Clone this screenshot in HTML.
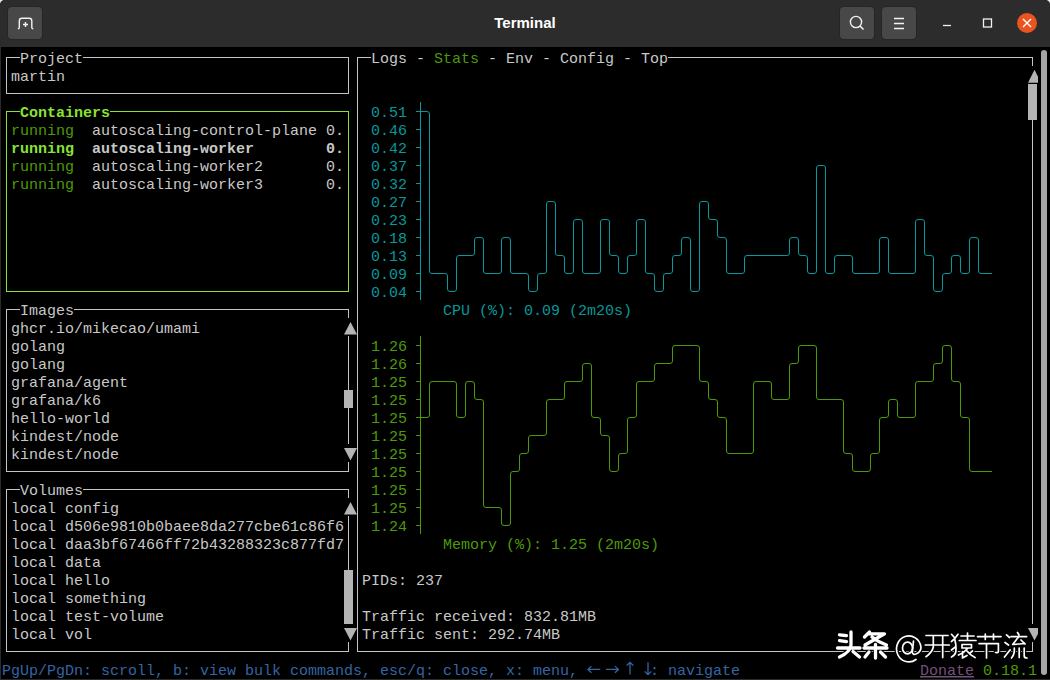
<!DOCTYPE html>
<html><head><meta charset="utf-8"><style>
html,body{margin:0;padding:0;}
body{width:1050px;height:680px;overflow:hidden;background:#e8e8e8;position:relative;}
#win{position:absolute;left:0;top:0;width:1050px;height:680px;background:#000;border-radius:5px 5px 0 0;overflow:hidden;}
#tb{position:absolute;left:0;top:0;width:1050px;height:47px;background:#2c2c2c;}
.btn{position:absolute;top:7px;width:34px;height:32px;background:#484848;border-radius:4px;box-shadow:0 0 0 1px #262626;}
.btn svg{position:absolute;left:0;top:0;}
#title{position:absolute;left:0;width:1050px;top:14px;text-align:center;color:#fff;font:bold 15px "Liberation Sans",sans-serif;}
#term{position:absolute;left:0;top:0;}
#term text{font-family:"Liberation Mono",monospace;font-size:15px;white-space:pre;}
#lb{position:absolute;left:0;top:47px;width:1px;height:633px;background:#2a2a2a;}
#bb{position:absolute;left:0;top:679px;width:1050px;height:1px;background:#2a2a2a;}
#gsb{position:absolute;left:1041px;top:50px;width:6px;height:625px;background:#a6a6a6;border-radius:3px;}
</style></head><body><div id="win">

<div id="tb">
  <div class="btn" style="left:8px"><svg width="34" height="32" viewBox="0 0 34 32"><path d="M9.8,21.9 Q11.3,21.9 11.3,20.5 V14 Q11.3,11.3 14,11.3 H21.1 Q23.8,11.3 23.8,14 V20.5 Q23.8,21.9 25.3,21.9" fill="none" stroke="#f2f2f2" stroke-width="1.4"/><path d="M17.5,15 v5 M15,17.5 h5" stroke="#f2f2f2" stroke-width="1.4"/></svg></div>
  <div id="title">Terminal</div>
  <div class="btn" style="left:840px"><svg width="34" height="32" viewBox="0 0 34 32"><circle cx="16" cy="15" r="5.6" fill="none" stroke="#f2f2f2" stroke-width="1.4"/><path d="M20,19 L23.5,22.5" stroke="#f2f2f2" stroke-width="1.6"/></svg></div>
  <div class="btn" style="left:882px"><svg width="34" height="32" viewBox="0 0 34 32"><path d="M12,11.5 h10 M12,16.5 h10 M12,21.5 h10" stroke="#f2f2f2" stroke-width="1.3"/></svg></div>
  <svg style="position:absolute;left:0;top:0" width="1050" height="47">
    <path d="M943,25.5 h8" stroke="#f2f2f2" stroke-width="1.3"/>
    <rect x="983.5" y="19" width="8" height="8" fill="none" stroke="#f2f2f2" stroke-width="1.3"/>
    <circle cx="1027" cy="23" r="10" fill="#e95420"/>
    <path d="M1023,19 L1031,27 M1031,19 L1023,27" stroke="#fff" stroke-width="1.4"/>
  </svg>
</div>
<svg id="term" width="1050" height="680" xml:space="preserve">
<line x1="6.0" y1="57.5" x2="20" y2="57.5" stroke="#c4c4c4" stroke-width="1"/>
<line x1="83" y1="57.5" x2="349.0" y2="57.5" stroke="#c4c4c4" stroke-width="1"/>
<line x1="6.0" y1="93.5" x2="349.0" y2="93.5" stroke="#c4c4c4" stroke-width="1"/>
<line x1="6.5" y1="57.5" x2="6.5" y2="93.5" stroke="#c4c4c4" stroke-width="1"/>
<line x1="348.5" y1="57.5" x2="348.5" y2="93.5" stroke="#c4c4c4" stroke-width="1"/>
<line x1="6.0" y1="111.5" x2="20" y2="111.5" stroke="#8ae234" stroke-width="1"/>
<line x1="110" y1="111.5" x2="349.0" y2="111.5" stroke="#8ae234" stroke-width="1"/>
<line x1="6.0" y1="291.5" x2="349.0" y2="291.5" stroke="#8ae234" stroke-width="1"/>
<line x1="6.5" y1="111.5" x2="6.5" y2="291.5" stroke="#8ae234" stroke-width="1"/>
<line x1="348.5" y1="111.5" x2="348.5" y2="291.5" stroke="#8ae234" stroke-width="1"/>
<line x1="6.0" y1="309.5" x2="20" y2="309.5" stroke="#c4c4c4" stroke-width="1"/>
<line x1="74" y1="309.5" x2="349.0" y2="309.5" stroke="#c4c4c4" stroke-width="1"/>
<line x1="6.0" y1="471.5" x2="349.0" y2="471.5" stroke="#c4c4c4" stroke-width="1"/>
<line x1="6.5" y1="309.5" x2="6.5" y2="471.5" stroke="#c4c4c4" stroke-width="1"/>
<line x1="348.5" y1="309.5" x2="348.5" y2="318" stroke="#c4c4c4" stroke-width="1"/>
<polygon points="344,334.5 350.5,322 357,334.5" fill="#b4b4b4"/>
<line x1="348.5" y1="336" x2="348.5" y2="354" stroke="#c4c4c4" stroke-width="1"/>
<line x1="348.5" y1="354" x2="348.5" y2="372" stroke="#c4c4c4" stroke-width="1"/>
<line x1="348.5" y1="372" x2="348.5" y2="390" stroke="#c4c4c4" stroke-width="1"/>
<rect x="344" y="390" width="9" height="18" fill="#b4b4b4" />
<line x1="348.5" y1="408" x2="348.5" y2="426" stroke="#c4c4c4" stroke-width="1"/>
<line x1="348.5" y1="426" x2="348.5" y2="444" stroke="#c4c4c4" stroke-width="1"/>
<polygon points="344,448 350.5,460.5 357,448" fill="#b4b4b4"/>
<line x1="348.5" y1="462" x2="348.5" y2="471.5" stroke="#c4c4c4" stroke-width="1"/>
<line x1="6.0" y1="489.5" x2="20" y2="489.5" stroke="#c4c4c4" stroke-width="1"/>
<line x1="83" y1="489.5" x2="349.0" y2="489.5" stroke="#c4c4c4" stroke-width="1"/>
<line x1="6.0" y1="651.5" x2="349.0" y2="651.5" stroke="#c4c4c4" stroke-width="1"/>
<line x1="6.5" y1="489.5" x2="6.5" y2="651.5" stroke="#c4c4c4" stroke-width="1"/>
<line x1="348.5" y1="489.5" x2="348.5" y2="498" stroke="#c4c4c4" stroke-width="1"/>
<polygon points="344,514.5 350.5,502 357,514.5" fill="#b4b4b4"/>
<line x1="348.5" y1="516" x2="348.5" y2="534" stroke="#c4c4c4" stroke-width="1"/>
<line x1="348.5" y1="534" x2="348.5" y2="552" stroke="#c4c4c4" stroke-width="1"/>
<line x1="348.5" y1="552" x2="348.5" y2="570" stroke="#c4c4c4" stroke-width="1"/>
<rect x="344" y="570" width="9" height="18" fill="#b4b4b4" />
<rect x="344" y="588" width="9" height="18" fill="#b4b4b4" />
<rect x="344" y="606" width="9" height="18" fill="#b4b4b4" />
<polygon points="344,628 350.5,640.5 357,628" fill="#b4b4b4"/>
<line x1="348.5" y1="642" x2="348.5" y2="651.5" stroke="#c4c4c4" stroke-width="1"/>
<line x1="357.0" y1="57.5" x2="371" y2="57.5" stroke="#c4c4c4" stroke-width="1"/>
<line x1="668" y1="57.5" x2="1033.0" y2="57.5" stroke="#c4c4c4" stroke-width="1"/>
<line x1="357.0" y1="651.5" x2="1033.0" y2="651.5" stroke="#c4c4c4" stroke-width="1"/>
<line x1="357.5" y1="57.5" x2="357.5" y2="651.5" stroke="#c4c4c4" stroke-width="1"/>
<line x1="1032.5" y1="57.5" x2="1032.5" y2="66" stroke="#c4c4c4" stroke-width="1"/>
<polygon points="1028,82.8 1034.5,69.8 1038,76.8 1038,82.8" fill="#b4b4b4"/>
<rect x="1028" y="84" width="9" height="18" fill="#b4b4b4" />
<rect x="1028" y="102" width="9" height="18" fill="#b4b4b4" />
<line x1="1032.5" y1="120" x2="1032.5" y2="138" stroke="#c4c4c4" stroke-width="1"/>
<line x1="1032.5" y1="138" x2="1032.5" y2="156" stroke="#c4c4c4" stroke-width="1"/>
<line x1="1032.5" y1="156" x2="1032.5" y2="174" stroke="#c4c4c4" stroke-width="1"/>
<line x1="1032.5" y1="174" x2="1032.5" y2="192" stroke="#c4c4c4" stroke-width="1"/>
<line x1="1032.5" y1="192" x2="1032.5" y2="210" stroke="#c4c4c4" stroke-width="1"/>
<line x1="1032.5" y1="210" x2="1032.5" y2="228" stroke="#c4c4c4" stroke-width="1"/>
<line x1="1032.5" y1="228" x2="1032.5" y2="246" stroke="#c4c4c4" stroke-width="1"/>
<line x1="1032.5" y1="246" x2="1032.5" y2="264" stroke="#c4c4c4" stroke-width="1"/>
<line x1="1032.5" y1="264" x2="1032.5" y2="282" stroke="#c4c4c4" stroke-width="1"/>
<line x1="1032.5" y1="282" x2="1032.5" y2="300" stroke="#c4c4c4" stroke-width="1"/>
<line x1="1032.5" y1="300" x2="1032.5" y2="318" stroke="#c4c4c4" stroke-width="1"/>
<line x1="1032.5" y1="318" x2="1032.5" y2="336" stroke="#c4c4c4" stroke-width="1"/>
<line x1="1032.5" y1="336" x2="1032.5" y2="354" stroke="#c4c4c4" stroke-width="1"/>
<line x1="1032.5" y1="354" x2="1032.5" y2="372" stroke="#c4c4c4" stroke-width="1"/>
<line x1="1032.5" y1="372" x2="1032.5" y2="390" stroke="#c4c4c4" stroke-width="1"/>
<line x1="1032.5" y1="390" x2="1032.5" y2="408" stroke="#c4c4c4" stroke-width="1"/>
<line x1="1032.5" y1="408" x2="1032.5" y2="426" stroke="#c4c4c4" stroke-width="1"/>
<line x1="1032.5" y1="426" x2="1032.5" y2="444" stroke="#c4c4c4" stroke-width="1"/>
<line x1="1032.5" y1="444" x2="1032.5" y2="462" stroke="#c4c4c4" stroke-width="1"/>
<line x1="1032.5" y1="462" x2="1032.5" y2="480" stroke="#c4c4c4" stroke-width="1"/>
<line x1="1032.5" y1="480" x2="1032.5" y2="498" stroke="#c4c4c4" stroke-width="1"/>
<line x1="1032.5" y1="498" x2="1032.5" y2="516" stroke="#c4c4c4" stroke-width="1"/>
<line x1="1032.5" y1="516" x2="1032.5" y2="534" stroke="#c4c4c4" stroke-width="1"/>
<line x1="1032.5" y1="534" x2="1032.5" y2="552" stroke="#c4c4c4" stroke-width="1"/>
<line x1="1032.5" y1="552" x2="1032.5" y2="570" stroke="#c4c4c4" stroke-width="1"/>
<line x1="1032.5" y1="570" x2="1032.5" y2="588" stroke="#c4c4c4" stroke-width="1"/>
<line x1="1032.5" y1="588" x2="1032.5" y2="606" stroke="#c4c4c4" stroke-width="1"/>
<line x1="1032.5" y1="606" x2="1032.5" y2="624" stroke="#c4c4c4" stroke-width="1"/>
<polygon points="1028,628 1038,628 1038,633.7 1034.5,640.6" fill="#b4b4b4"/>
<line x1="1032.5" y1="642" x2="1032.5" y2="651.5" stroke="#c4c4c4" stroke-width="1"/>
<line x1="420.5" y1="102" x2="420.5" y2="300" stroke="#06989a" stroke-width="1"/>
<line x1="416" y1="129.5" x2="420.5" y2="129.5" stroke="#06989a" stroke-width="1"/>
<line x1="416" y1="147.5" x2="420.5" y2="147.5" stroke="#06989a" stroke-width="1"/>
<line x1="416" y1="165.5" x2="420.5" y2="165.5" stroke="#06989a" stroke-width="1"/>
<line x1="416" y1="183.5" x2="420.5" y2="183.5" stroke="#06989a" stroke-width="1"/>
<line x1="416" y1="201.5" x2="420.5" y2="201.5" stroke="#06989a" stroke-width="1"/>
<line x1="416" y1="219.5" x2="420.5" y2="219.5" stroke="#06989a" stroke-width="1"/>
<line x1="416" y1="237.5" x2="420.5" y2="237.5" stroke="#06989a" stroke-width="1"/>
<line x1="416" y1="255.5" x2="420.5" y2="255.5" stroke="#06989a" stroke-width="1"/>
<line x1="416" y1="273.5" x2="420.5" y2="273.5" stroke="#06989a" stroke-width="1"/>
<line x1="416" y1="291.5" x2="420.5" y2="291.5" stroke="#06989a" stroke-width="1"/>
<path d="M416,111.5 H427.0 Q429.5,111.5 429.5,114.0 V271.0 Q429.5,273.5 432.0,273.5 H445.0 Q447.5,273.5 447.5,276.0 V289.0 Q447.5,291.5 450.0,291.5 H454.0 Q456.5,291.5 456.5,289.0 V258.0 Q456.5,255.5 459.0,255.5 H472.0 Q474.5,255.5 474.5,253.0 V240.0 Q474.5,237.5 477.0,237.5 H481.0 Q483.5,237.5 483.5,240.0 V271.0 Q483.5,273.5 486.0,273.5 H499.0 Q501.5,273.5 501.5,271.0 V240.0 Q501.5,237.5 504.0,237.5 H508.0 Q510.5,237.5 510.5,240.0 V271.0 Q510.5,273.5 513.0,273.5 H526.0 Q528.5,273.5 528.5,276.0 V289.0 Q528.5,291.5 531.0,291.5 H535.0 Q537.5,291.5 537.5,289.0 V276.0 Q537.5,273.5 540.0,273.5 H544.0 Q546.5,273.5 546.5,271.0 V204.0 Q546.5,201.5 549.0,201.5 H553.0 Q555.5,201.5 555.5,204.0 V253.0 Q555.5,255.5 558.0,255.5 H562.0 Q564.5,255.5 564.5,258.0 V271.0 Q564.5,273.5 567.0,273.5 H571.0 Q573.5,273.5 573.5,271.0 V222.0 Q573.5,219.5 576.0,219.5 H580.0 Q582.5,219.5 582.5,222.0 V271.0 Q582.5,273.5 585.0,273.5 H598.0 Q600.5,273.5 600.5,271.0 V222.0 Q600.5,219.5 603.0,219.5 H607.0 Q609.5,219.5 609.5,222.0 V253.0 Q609.5,255.5 612.0,255.5 H616.0 Q618.5,255.5 618.5,258.0 V271.0 Q618.5,273.5 621.0,273.5 H625.0 Q627.5,273.5 627.5,271.0 V258.0 Q627.5,255.5 630.0,255.5 H634.0 Q636.5,255.5 636.5,253.0 V222.0 Q636.5,219.5 639.0,219.5 H643.0 Q645.5,219.5 645.5,222.0 V271.0 Q645.5,273.5 648.0,273.5 H652.0 Q654.5,273.5 654.5,276.0 V289.0 Q654.5,291.5 657.0,291.5 H661.0 Q663.5,291.5 663.5,289.0 V276.0 Q663.5,273.5 666.0,273.5 H670.0 Q672.5,273.5 672.5,271.0 V258.0 Q672.5,255.5 675.0,255.5 H679.0 Q681.5,255.5 681.5,253.0 V240.0 Q681.5,237.5 684.0,237.5 H688.0 Q690.5,237.5 690.5,240.0 V289.0 Q690.5,291.5 693.0,291.5 H697.0 Q699.5,291.5 699.5,289.0 V204.0 Q699.5,201.5 702.0,201.5 H706.0 Q708.5,201.5 708.5,204.0 V217.0 Q708.5,219.5 711.0,219.5 H715.0 Q717.5,219.5 717.5,222.0 V235.0 Q717.5,237.5 720.0,237.5 H724.0 Q726.5,237.5 726.5,240.0 V271.0 Q726.5,273.5 729.0,273.5 H742.0 Q744.5,273.5 744.5,271.0 V258.0 Q744.5,255.5 747.0,255.5 H787.0 Q789.5,255.5 789.5,253.0 V240.0 Q789.5,237.5 792.0,237.5 H796.0 Q798.5,237.5 798.5,240.0 V253.0 Q798.5,255.5 801.0,255.5 H805.0 Q807.5,255.5 807.5,258.0 V271.0 Q807.5,273.5 810.0,273.5 H814.0 Q816.5,273.5 816.5,271.0 V168.0 Q816.5,165.5 819.0,165.5 H823.0 Q825.5,165.5 825.5,168.0 V271.0 Q825.5,273.5 828.0,273.5 H832.0 Q834.5,273.5 834.5,271.0 V258.0 Q834.5,255.5 837.0,255.5 H850.0 Q852.5,255.5 852.5,258.0 V271.0 Q852.5,273.5 855.0,273.5 H877.0 Q879.5,273.5 879.5,271.0 V240.0 Q879.5,237.5 882.0,237.5 H886.0 Q888.5,237.5 888.5,240.0 V271.0 Q888.5,273.5 891.0,273.5 H913.0 Q915.5,273.5 915.5,271.0 V222.0 Q915.5,219.5 918.0,219.5 H922.0 Q924.5,219.5 924.5,222.0 V253.0 Q924.5,255.5 927.0,255.5 H931.0 Q933.5,255.5 933.5,258.0 V289.0 Q933.5,291.5 936.0,291.5 H940.0 Q942.5,291.5 942.5,289.0 V276.0 Q942.5,273.5 945.0,273.5 H949.0 Q951.5,273.5 951.5,271.0 V258.0 Q951.5,255.5 954.0,255.5 H958.0 Q960.5,255.5 960.5,258.0 V271.0 Q960.5,273.5 963.0,273.5 H967.0 Q969.5,273.5 969.5,271.0 V240.0 Q969.5,237.5 972.0,237.5 H976.0 Q978.5,237.5 978.5,240.0 V271.0 Q978.5,273.5 981.0,273.5 H992" fill="none" stroke="#06989a" stroke-width="1"/>
<line x1="420.5" y1="336" x2="420.5" y2="534" stroke="#4e9a06" stroke-width="1"/>
<line x1="416" y1="345.5" x2="420.5" y2="345.5" stroke="#4e9a06" stroke-width="1"/>
<line x1="416" y1="363.5" x2="420.5" y2="363.5" stroke="#4e9a06" stroke-width="1"/>
<line x1="416" y1="381.5" x2="420.5" y2="381.5" stroke="#4e9a06" stroke-width="1"/>
<line x1="416" y1="399.5" x2="420.5" y2="399.5" stroke="#4e9a06" stroke-width="1"/>
<line x1="416" y1="435.5" x2="420.5" y2="435.5" stroke="#4e9a06" stroke-width="1"/>
<line x1="416" y1="453.5" x2="420.5" y2="453.5" stroke="#4e9a06" stroke-width="1"/>
<line x1="416" y1="471.5" x2="420.5" y2="471.5" stroke="#4e9a06" stroke-width="1"/>
<line x1="416" y1="489.5" x2="420.5" y2="489.5" stroke="#4e9a06" stroke-width="1"/>
<line x1="416" y1="507.5" x2="420.5" y2="507.5" stroke="#4e9a06" stroke-width="1"/>
<line x1="416" y1="525.5" x2="420.5" y2="525.5" stroke="#4e9a06" stroke-width="1"/>
<path d="M416,417.5 H427.0 Q429.5,417.5 429.5,415.0 V384.0 Q429.5,381.5 432.0,381.5 H454.0 Q456.5,381.5 456.5,384.0 V415.0 Q456.5,417.5 459.0,417.5 H463.0 Q465.5,417.5 465.5,415.0 V384.0 Q465.5,381.5 468.0,381.5 H472.0 Q474.5,381.5 474.5,384.0 V397.0 Q474.5,399.5 477.0,399.5 H481.0 Q483.5,399.5 483.5,402.0 V505.0 Q483.5,507.5 486.0,507.5 H499.0 Q501.5,507.5 501.5,510.0 V523.0 Q501.5,525.5 504.0,525.5 H508.0 Q510.5,525.5 510.5,523.0 V474.0 Q510.5,471.5 513.0,471.5 H517.0 Q519.5,471.5 519.5,469.0 V456.0 Q519.5,453.5 522.0,453.5 H526.0 Q528.5,453.5 528.5,451.0 V438.0 Q528.5,435.5 531.0,435.5 H544.0 Q546.5,435.5 546.5,433.0 V402.0 Q546.5,399.5 549.0,399.5 H562.0 Q564.5,399.5 564.5,397.0 V384.0 Q564.5,381.5 567.0,381.5 H580.0 Q582.5,381.5 582.5,379.0 V366.0 Q582.5,363.5 585.0,363.5 H589.0 Q591.5,363.5 591.5,366.0 V415.0 Q591.5,417.5 594.0,417.5 H598.0 Q600.5,417.5 600.5,420.0 V433.0 Q600.5,435.5 603.0,435.5 H607.0 Q609.5,435.5 609.5,438.0 V469.0 Q609.5,471.5 612.0,471.5 H616.0 Q618.5,471.5 618.5,469.0 V456.0 Q618.5,453.5 621.0,453.5 H625.0 Q627.5,453.5 627.5,451.0 V420.0 Q627.5,417.5 630.0,417.5 H634.0 Q636.5,417.5 636.5,415.0 V384.0 Q636.5,381.5 639.0,381.5 H652.0 Q654.5,381.5 654.5,379.0 V366.0 Q654.5,363.5 657.0,363.5 H670.0 Q672.5,363.5 672.5,361.0 V348.0 Q672.5,345.5 675.0,345.5 H697.0 Q699.5,345.5 699.5,348.0 V379.0 Q699.5,381.5 702.0,381.5 H706.0 Q708.5,381.5 708.5,384.0 V397.0 Q708.5,399.5 711.0,399.5 H715.0 Q717.5,399.5 717.5,402.0 V415.0 Q717.5,417.5 720.0,417.5 H724.0 Q726.5,417.5 726.5,420.0 V451.0 Q726.5,453.5 729.0,453.5 H751.0 Q753.5,453.5 753.5,451.0 V384.0 Q753.5,381.5 756.0,381.5 H769.0 Q771.5,381.5 771.5,384.0 V397.0 Q771.5,399.5 774.0,399.5 H787.0 Q789.5,399.5 789.5,397.0 V366.0 Q789.5,363.5 792.0,363.5 H796.0 Q798.5,363.5 798.5,361.0 V348.0 Q798.5,345.5 801.0,345.5 H814.0 Q816.5,345.5 816.5,348.0 V397.0 Q816.5,399.5 819.0,399.5 H841.0 Q843.5,399.5 843.5,402.0 V451.0 Q843.5,453.5 846.0,453.5 H850.0 Q852.5,453.5 852.5,456.0 V469.0 Q852.5,471.5 855.0,471.5 H868.0 Q870.5,471.5 870.5,469.0 V456.0 Q870.5,453.5 873.0,453.5 H877.0 Q879.5,453.5 879.5,451.0 V420.0 Q879.5,417.5 882.0,417.5 H886.0 Q888.5,417.5 888.5,415.0 V402.0 Q888.5,399.5 891.0,399.5 H895.0 Q897.5,399.5 897.5,402.0 V415.0 Q897.5,417.5 900.0,417.5 H913.0 Q915.5,417.5 915.5,415.0 V384.0 Q915.5,381.5 918.0,381.5 H931.0 Q933.5,381.5 933.5,379.0 V366.0 Q933.5,363.5 936.0,363.5 H940.0 Q942.5,363.5 942.5,361.0 V348.0 Q942.5,345.5 945.0,345.5 H949.0 Q951.5,345.5 951.5,348.0 V379.0 Q951.5,381.5 954.0,381.5 H958.0 Q960.5,381.5 960.5,384.0 V415.0 Q960.5,417.5 963.0,417.5 H967.0 Q969.5,417.5 969.5,420.0 V469.0 Q969.5,471.5 972.0,471.5 H992" fill="none" stroke="#4e9a06" stroke-width="1"/>
<path d="M588,669.4 H600.3 M591.4,666.1 L588,669.4 L591.4,672.7 M606,669.4 H618.4 M615,666.1 L618.4,669.4 L615,672.7 M630,662.3 V674.6 M626.7,665.5 L630,662.3 L633.3,665.5 M648,662.3 V674.6 M644.7,671.4 L648,674.6 L651.3,671.4" fill="none" stroke="#3465a4" stroke-width="1.3"/>
<text x="20" y="63" fill="#c8c8c8">Project</text>
<text x="11" y="81" fill="#c8c8c8">martin</text>
<text x="20" y="117" fill="#8ae234" font-weight="bold">Containers</text>
<text x="11" y="135" fill="#4e9a06">running</text>
<text x="92" y="135" fill="#c8c8c8">autoscaling-control-plane</text>
<text x="326" y="135" fill="#c8c8c8">0.</text>
<text x="11" y="153" fill="#8ae234" font-weight="bold">running</text>
<text x="92" y="153" fill="#c8c8c8" font-weight="bold">autoscaling-worker</text>
<text x="326" y="153" fill="#c8c8c8" font-weight="bold">0.</text>
<text x="11" y="171" fill="#4e9a06">running</text>
<text x="92" y="171" fill="#c8c8c8">autoscaling-worker2</text>
<text x="326" y="171" fill="#c8c8c8">0.</text>
<text x="11" y="189" fill="#4e9a06">running</text>
<text x="92" y="189" fill="#c8c8c8">autoscaling-worker3</text>
<text x="326" y="189" fill="#c8c8c8">0.</text>
<text x="20" y="315" fill="#c8c8c8">Images</text>
<text x="11" y="333" fill="#c8c8c8">ghcr.io/mikecao/umami</text>
<text x="11" y="351" fill="#c8c8c8">golang</text>
<text x="11" y="369" fill="#c8c8c8">golang</text>
<text x="11" y="387" fill="#c8c8c8">grafana/agent</text>
<text x="11" y="405" fill="#c8c8c8">grafana/k6</text>
<text x="11" y="423" fill="#c8c8c8">hello-world</text>
<text x="11" y="441" fill="#c8c8c8">kindest/node</text>
<text x="11" y="459" fill="#c8c8c8">kindest/node</text>
<text x="20" y="495" fill="#c8c8c8">Volumes</text>
<text x="11" y="513" fill="#c8c8c8">local config</text>
<text x="11" y="531" fill="#c8c8c8">local d506e9810b0baee8da277cbe61c86f6</text>
<text x="11" y="549" fill="#c8c8c8">local daa3bf67466ff72b43288323c877fd7</text>
<text x="11" y="567" fill="#c8c8c8">local data</text>
<text x="11" y="585" fill="#c8c8c8">local hello</text>
<text x="11" y="603" fill="#c8c8c8">local something</text>
<text x="11" y="621" fill="#c8c8c8">local test-volume</text>
<text x="11" y="639" fill="#c8c8c8">local vol</text>
<text x="371" y="63" fill="#c8c8c8">Logs - </text>
<text x="434" y="63" fill="#4e9a06">Stats</text>
<text x="479" y="63" fill="#c8c8c8"> - Env - Config - Top</text>
<text x="371" y="117" fill="#06989a">0.51</text>
<text x="371" y="135" fill="#06989a">0.46</text>
<text x="371" y="153" fill="#06989a">0.42</text>
<text x="371" y="171" fill="#06989a">0.37</text>
<text x="371" y="189" fill="#06989a">0.32</text>
<text x="371" y="207" fill="#06989a">0.27</text>
<text x="371" y="225" fill="#06989a">0.23</text>
<text x="371" y="243" fill="#06989a">0.18</text>
<text x="371" y="261" fill="#06989a">0.13</text>
<text x="371" y="279" fill="#06989a">0.09</text>
<text x="371" y="297" fill="#06989a">0.04</text>
<text x="443" y="315" fill="#06989a">CPU (%): 0.09 (2m20s)</text>
<text x="371" y="351" fill="#4e9a06">1.26</text>
<text x="371" y="369" fill="#4e9a06">1.26</text>
<text x="371" y="387" fill="#4e9a06">1.25</text>
<text x="371" y="405" fill="#4e9a06">1.25</text>
<text x="371" y="423" fill="#4e9a06">1.25</text>
<text x="371" y="441" fill="#4e9a06">1.25</text>
<text x="371" y="459" fill="#4e9a06">1.25</text>
<text x="371" y="477" fill="#4e9a06">1.25</text>
<text x="371" y="495" fill="#4e9a06">1.25</text>
<text x="371" y="513" fill="#4e9a06">1.25</text>
<text x="371" y="531" fill="#4e9a06">1.24</text>
<text x="443" y="549" fill="#4e9a06">Memory (%): 1.25 (2m20s)</text>
<text x="362" y="585" fill="#c8c8c8">PIDs: 237</text>
<text x="362" y="621" fill="#c8c8c8">Traffic received: 832.81MB</text>
<text x="362" y="639" fill="#c8c8c8">Traffic sent: 292.74MB</text>
<text x="2" y="675" fill="#3465a4">PgUp/PgDn: scroll, b: view bulk commands, esc/q: close, x: menu,</text>
<text x="650" y="675" fill="#3465a4">: navigate</text>
<text x="920" y="675" fill="#75507b" text-decoration="underline">Donate</text>
<text x="983" y="675" fill="#4e9a06">0.18.1</text>
<g fill="none" stroke-linecap="round" stroke-linejoin="round"><path d="M839.5,634.8 L846.5,635.6 M839.5,640.6 L846.5,641.6 M851,632 L851,645 Q850.5,652 839.5,657 M837.5,648 L860,648 M853,651.5 L859.5,657 M869.5,632 L864.5,637 M869,633.8 L884.5,633.8 L865,645 M872,637 Q878,642 886.5,645 M864,648 L887,648 M875.5,644.5 L875.5,658 M869,652 L865,657 M880.5,652 L885.5,657" stroke="#000" stroke-width="5.4"/><path d="M921,647 A12.3,13 0 1 0 916,659.5 M913.5,641 L912.3,652.5 Q913,655 916,654 Q921,652 921,647 M926,635.5 L948,635.5 M925.3,645 L949.3,645 M933.3,635.5 L933.3,647 Q932.5,652 926,656.7 M942.7,635.5 L942.7,657.5 M951.5,634.3 L954.2,637.3 M958,634.3 Q955,639 951.5,641.5 M954.8,639.5 Q956.5,646 955.8,652 Q955,655.5 951.5,657 M951.5,650 L955.3,647 M961,636 L974,636 M967.5,633 L967.5,640.5 M959.3,640.5 L976,640.5 M962,644.5 H971.5 V648 H962 Z M967.5,648.5 Q964,653 958.5,655 M962.5,651.5 L962.5,658 L967,655.5 M967,651 Q970,655 975,657.5 M972.5,651 L970,653 M977.5,636.6 L1001,636.6 M985.3,634 L985.3,639.5 M993.5,634 L993.5,639.5 M979,643.6 L998.4,643.6 L998.4,651.5 Q998.4,653 995.5,652.5 M986.5,643.6 L986.5,658 M1006.5,634.8 L1009.5,637.5 M1005,642.5 L1008.5,645 M1004.5,657 L1010.2,649.8 M1017.5,632.5 L1019,635 M1011,636.6 L1026.6,636.6 M1018.5,637 L1012.7,644.5 L1025,643.5 M1021,640 L1025,644 M1014.3,648 L1014.3,652 Q1013.5,656 1011.5,658 M1019.2,648 L1019.2,657.5 M1024.2,648 L1024.2,656 Q1024.2,658 1027,658" stroke="#000" stroke-width="4"/><ellipse cx="907.5" cy="648" rx="5" ry="5.8" stroke="#000" stroke-width="4"/><path d="M839.5,634.8 L846.5,635.6 M839.5,640.6 L846.5,641.6 M851,632 L851,645 Q850.5,652 839.5,657 M837.5,648 L860,648 M853,651.5 L859.5,657 M869.5,632 L864.5,637 M869,633.8 L884.5,633.8 L865,645 M872,637 Q878,642 886.5,645 M864,648 L887,648 M875.5,644.5 L875.5,658 M869,652 L865,657 M880.5,652 L885.5,657" stroke="#fff" stroke-width="3.3"/><path d="M921,647 A12.3,13 0 1 0 916,659.5 M913.5,641 L912.3,652.5 Q913,655 916,654 Q921,652 921,647 M926,635.5 L948,635.5 M925.3,645 L949.3,645 M933.3,635.5 L933.3,647 Q932.5,652 926,656.7 M942.7,635.5 L942.7,657.5 M951.5,634.3 L954.2,637.3 M958,634.3 Q955,639 951.5,641.5 M954.8,639.5 Q956.5,646 955.8,652 Q955,655.5 951.5,657 M951.5,650 L955.3,647 M961,636 L974,636 M967.5,633 L967.5,640.5 M959.3,640.5 L976,640.5 M962,644.5 H971.5 V648 H962 Z M967.5,648.5 Q964,653 958.5,655 M962.5,651.5 L962.5,658 L967,655.5 M967,651 Q970,655 975,657.5 M972.5,651 L970,653 M977.5,636.6 L1001,636.6 M985.3,634 L985.3,639.5 M993.5,634 L993.5,639.5 M979,643.6 L998.4,643.6 L998.4,651.5 Q998.4,653 995.5,652.5 M986.5,643.6 L986.5,658 M1006.5,634.8 L1009.5,637.5 M1005,642.5 L1008.5,645 M1004.5,657 L1010.2,649.8 M1017.5,632.5 L1019,635 M1011,636.6 L1026.6,636.6 M1018.5,637 L1012.7,644.5 L1025,643.5 M1021,640 L1025,644 M1014.3,648 L1014.3,652 Q1013.5,656 1011.5,658 M1019.2,648 L1019.2,657.5 M1024.2,648 L1024.2,656 Q1024.2,658 1027,658" stroke="#fff" stroke-width="1.7"/><ellipse cx="907.5" cy="648" rx="5" ry="5.8" stroke="#fff" stroke-width="1.7"/></g>
</svg>
<div id="gsb"></div>
<div id="lb"></div><div id="bb"></div>
</div></body></html>
